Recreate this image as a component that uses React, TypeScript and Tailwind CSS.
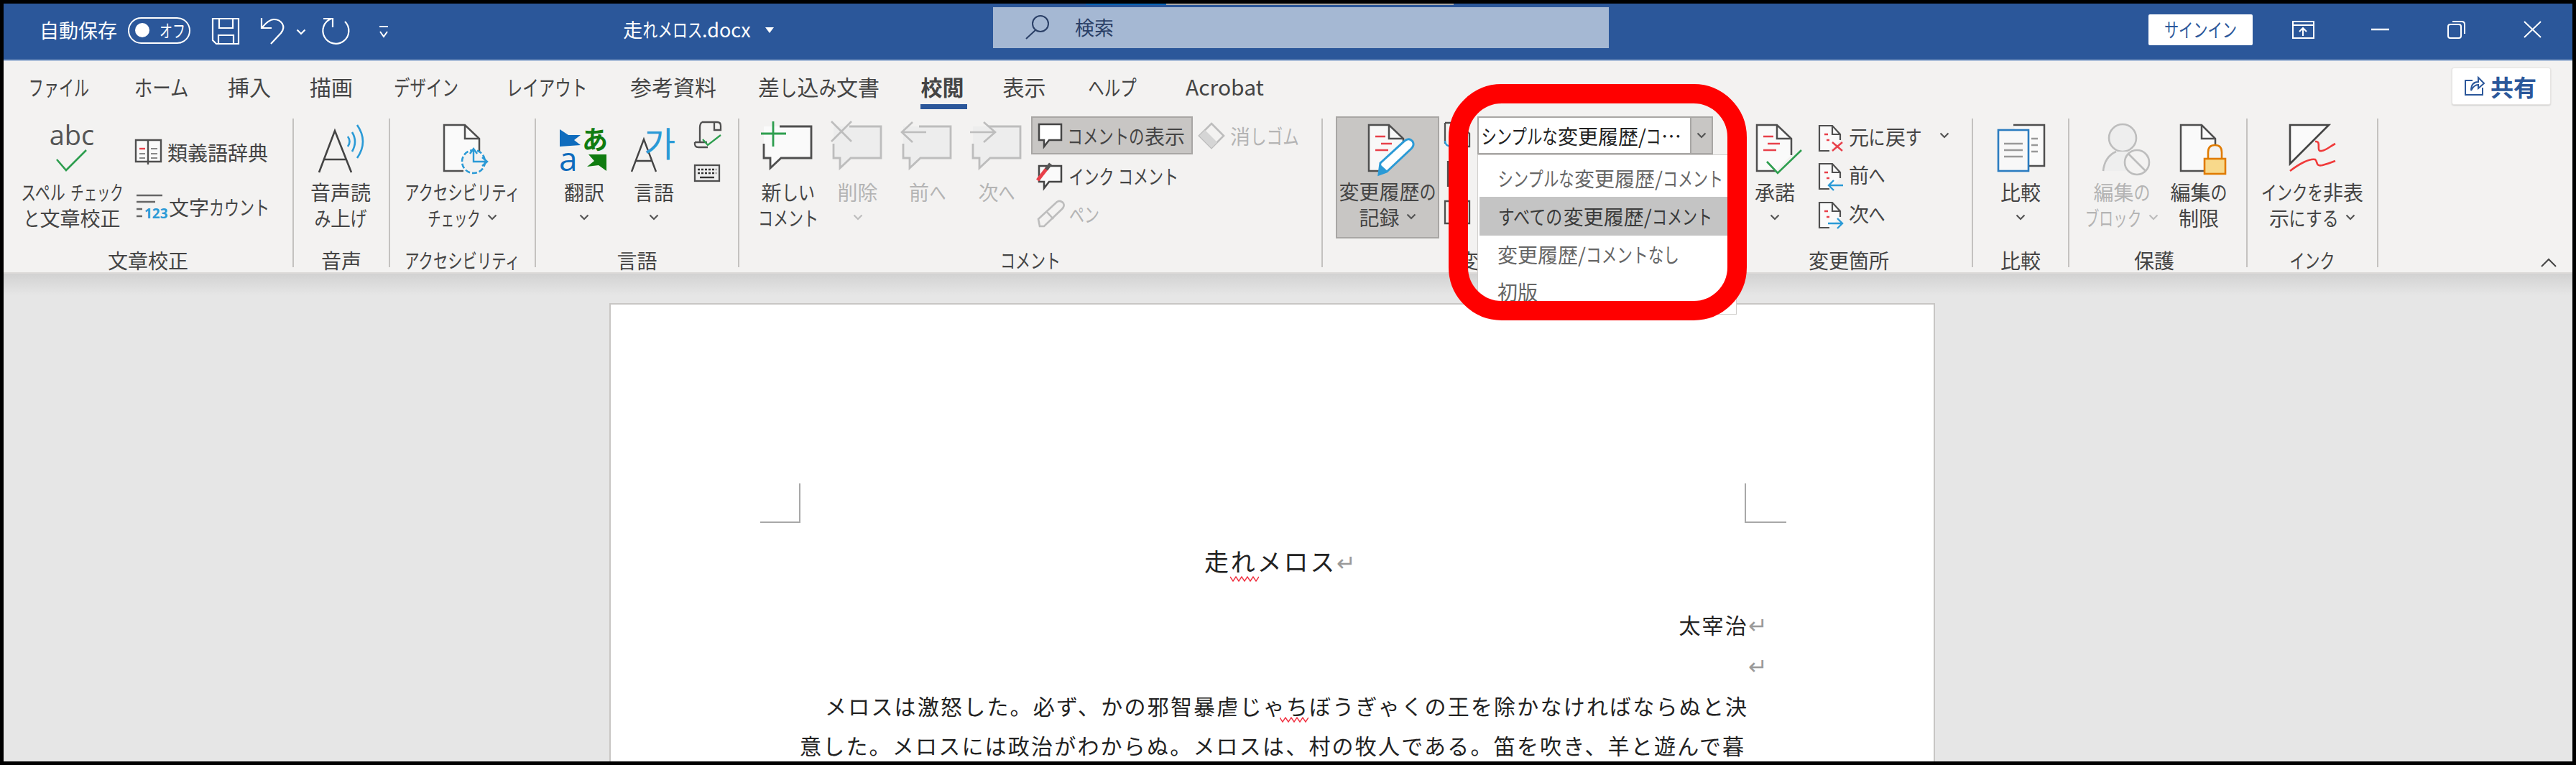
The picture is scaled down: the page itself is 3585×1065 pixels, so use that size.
import React from "react";

const KANA = /([\u3040-\u30ff]+)/;
const kw = (c: string) => {
  if ("ァィゥェォッャュョ".includes(c)) return 0.56;
  if ("ーホム".includes(c)) return 0.85;
  if (c >= "\u3040" && c <= "\u309f") return 0.82;
  return 0.75;
};

function J({ t }: { t: string }) {
  return (
    <>
      {t.split(KANA).map((run, i) => {
        if (!run) return null;
        if (!KANA.test(run)) return <span key={i}>{run}</span>;
        const chars = [...run];
        const sum = chars.reduce((a, c) => a + kw(c), 0);
        return (
          <span key={i} className="inline-flex justify-center" style={{ width: `${sum}em` }}>
            <span className="shrink-0" style={{ transform: `scaleX(${sum / chars.length})` }}>
              {run}
            </span>
          </span>
        );
      })}
    </>
  );
}

function Sv({ x, y, w, h, children, className }: { x: number; y: number; w: number; h: number; children?: React.ReactNode; className?: string }) {
  return (
    <svg width={w} height={h} viewBox={`${x} ${y} ${w} ${h}`} fill="none" strokeLinejoin="miter" className={"block shrink-0 overflow-visible " + (className || "")}>
      {children}
    </svg>
  );
}

function Chev({ c = "#555", className }: { c?: string; className?: string }) {
  return (
    <svg width="14" height="9" viewBox="0 0 14 9" fill="none" className={"inline-block shrink-0 " + (className || "")}>
      <path d="M1.5 1.5 L7 7 L12.5 1.5" stroke={c} strokeWidth="2.2" />
    </svg>
  );
}

const DARK = "#4f4f4f";
const GR = "#bdbdbd";

function Doc({ x, y, w = 48, h = 64, f = 29, g = 19, e = 20, fill = "#fafafa", s = DARK, sw = 2.5 }: { x: number; y: number; w?: number; h?: number; f?: number; g?: number; e?: number; fill?: string; s?: string; sw?: number }) {
  return (
    <>
      <path d={`M${x + w} ${y + h - e} V${y + g} L${x + f} ${y} H${x} V${y + h} H${x + w - e}`} fill={fill} stroke={s} strokeWidth={sw} />
      <path d={`M${x + f} ${y} V${y + g} H${x + w}`} stroke={s} strokeWidth={sw} />
    </>
  );
}

function Bub({ dx = 0, s = DARK, fill = "#fafafa" }: { dx?: number; s?: string; fill?: string }) {
  return (
    <g transform={`translate(${dx} 0)`}>
      <path d="M1063 176 H1129 V220 H1087 L1072 234 V220 H1063 Z" fill={fill} />
      <path d="M1085 176 H1129 V220 H1087 L1072 234 V220 H1063 V200" stroke={s} strokeWidth="2.8" />
    </g>
  );
}

function Big({ x, w, y = 165, icon, l1, l2, chev, gray }: { x: number; w: number; y?: number; icon: React.ReactNode; l1?: string; l2?: string; chev?: boolean; gray?: boolean }) {
  return (
    <div className={"flex flex-col items-center shrink-0 " + (gray ? "text-[#b4b4b4]" : "")}>
      <Sv x={x} y={y} w={w} h={85}>
        {icon}
      </Sv>
      <div className="h-[35px] leading-[35px] whitespace-pre">
        <J t={l1 || ""} />
      </div>
      <div className="h-[35px] flex items-center justify-center whitespace-pre">
        {l2 ? <J t={l2} /> : null}
        {chev ? <Chev c={gray ? GR : "#555"} className={l2 ? "ml-[9px]" : ""} /> : null}
      </div>
    </div>
  );
}

function G({ w, label, labelCls, children }: { w: string; label: string; labelCls?: string; children: React.ReactNode }) {
  return (
    <div className={"shrink-0 mt-[5px] h-[207px] border-r-2 border-[#c4c2c0] " + w}>
      <div className="flex h-[182px]">{children}</div>
      <div className={"h-[30px] leading-[30px] whitespace-pre " + (labelCls || "text-center")}>
        <J t={label} />
      </div>
    </div>
  );
}

const tabs: [string, string][] = [
  ["ファイル", "w-[88px] ml-[33px]"],
  ["ホーム", "w-[77px] ml-[60px]"],
  ["挿入", "w-[62px] ml-[53px]"],
  ["描画", "w-[62px] ml-[52px]"],
  ["デザイン", "w-[99px] ml-[51px]"],
  ["レイアウト", "w-[117px] ml-[60px]"],
  ["参考資料", "w-[126px] ml-[55px]"],
  ["差し込み文書", "w-[177px] ml-[51px]"],
  ["校閲", "w-[61px] ml-[53px] font-bold"],
  ["表示", "w-[63px] ml-[52px]"],
  ["ヘルプ", "w-[78px] ml-[52px]"],
  ["Acrobat", "w-[121px] ml-[57px]"],
];

function Wave({ className }: { className: string }) {
  return (
    <svg width="40" height="8" viewBox="0 0 40 8" fill="none" className={"absolute " + className}>
      <path d="M0 1 L4 7 L8 1 L12 7 L16 1 L20 7 L24 1 L28 7 L32 1 L36 7 L40 1" stroke="#f03040" strokeWidth="1.4" />
    </svg>
  );
}

function Ret() {
  return <span className="text-[#9a9a9a] text-[32px] font-normal tracking-normal">↵</span>;
}

export default function App() {
  return (
    <div className="relative w-[3585px] h-[1065px] bg-black p-[5px] overflow-hidden text-[28px] text-[#444444] font-['Noto_Sans_CJK_JP','Noto_Sans',sans-serif]">
      <div className="w-[3575px] h-[1055px] flex flex-col overflow-hidden">
        {/* title bar */}
        <div className="h-[80px] shrink-0 bg-[#2b579a] flex items-center text-white text-[27px] whitespace-pre border-b-2 border-[#a9bcd8]">
          <div className="ml-[50px] -mt-[4px]">自動保存</div>
          <div className="ml-[15px] -mt-[4px] w-[87px] h-[37px] rounded-full border-2 border-white flex items-center pl-[8px] shrink-0">
            <div className="w-[20px] h-[20px] rounded-full bg-white" />
            <div className="ml-[14px] text-[24px]"><J t="オフ" /></div>
          </div>
          <Sv x={297} y={29} w={38} h={38} className="ml-[30px]">
            <path d="M298 30 H334 V65 H303 L298 60 Z M307 30 V43 H326 V30 M306 65 V53 H327 V65" stroke="#fff" strokeWidth="2.2" />
          </Sv>
          <Sv x={363} y={28} w={40} h={40} className="ml-[28px]">
            <path d="M379 65 L393 50 C401 40 393 31 383 31 C377 31 372 36 367 42" stroke="#fff" strokeWidth="2.2" />
            <path d="M366 29 V43 H380" stroke="#fff" strokeWidth="2.2" />
          </Sv>
          <Chev c="#fff" className="ml-[11px]" />
          <Sv x={450} y={28} w={42} h={40} className="ml-[22px]">
            <path d="M463 30 A18 18 0 1 0 482 34" stroke="#fff" strokeWidth="2.2" />
            <path d="M452 30 H465 V42" stroke="#fff" strokeWidth="2.2" />
          </Sv>
          <Sv x={528} y={36} w={16} h={18} className="ml-[36px]">
            <path d="M530 38 H542 M531 45 L536 52 L541 45" stroke="#fff" strokeWidth="2" />
          </Sv>
          <div className="ml-[321px] -mt-[6px] w-[186px] flex justify-center"><J t="走れメロス.docx" /></div>
          <svg width="12" height="8" viewBox="0 0 12 8" className="ml-[16px] -mt-[4px] shrink-0">
            <path d="M0 0 H12 L6 8 Z" fill="#fff" />
          </svg>
          <div className="ml-[305px] -mt-[12px] w-[857px] h-[57px] bg-[#a5b8d3] flex items-center shrink-0 text-[#2a3f66]">
            <Sv x={1428} y={27} w={34} h={34} className="ml-[45px]">
              <circle cx="1449" cy="39" r="11" stroke="#2a3f66" strokeWidth="2" />
              <path d="M1442 48 L1429 60" stroke="#2a3f66" strokeWidth="2" />
            </Sv>
            <div className="ml-[35px] text-[27px]">検索</div>
          </div>
          <div className="ml-[751px] -mt-[6px] w-[145px] h-[43px] bg-white rounded-[2px] text-[#2b579a] flex items-center justify-center text-[27px] shrink-0">
            <J t="サインイン" />
          </div>
          <Sv x={3190} y={30} w={34} h={28} className="ml-[54px] -mt-[6px]">
            <path d="M3192 33 H3221 V56 H3192 Z M3192 38 H3221 M3206 53 V42 M3201 47 L3206 42 L3211 47" stroke="#fff" strokeWidth="2" />
          </Sv>
          <Sv x={3300} y={40} w={28} h={6} className="ml-[76px] -mt-[6px]">
            <path d="M3301 43 H3326" stroke="#fff" strokeWidth="2.5" />
          </Sv>
          <Sv x={3406} y={30} w={28} h={28} className="ml-[78px] -mt-[6px]">
            <path d="M3408 40 Q3408 37 3411 37 H3423 Q3426 37 3426 40 V53 Q3426 56 3423 56 H3411 Q3408 56 3408 53 Z M3414 33 H3427 Q3431 33 3431 37 V50" stroke="#fff" strokeWidth="2" />
          </Sv>
          <Sv x={3512} y={32} w={28} h={24} className="ml-[78px] -mt-[6px]">
            <path d="M3514 33 L3537 55 M3537 33 L3514 55" stroke="#fff" strokeWidth="2" />
          </Sv>
        </div>

        {/* ribbon */}
        <div className="h-[296px] shrink-0 bg-[#f3f2f1] relative border-b-2 border-[#dcdad8]">
          <div className="h-[75px] flex items-start pt-[13px] text-[30px]">
            {tabs.map(([t, c]) => (
              <div key={t} className={"relative h-[45px] flex items-center justify-center whitespace-pre shrink-0 " + c}>
                <J t={t} />
                {t === "校閲" ? <div className="absolute left-0 -right-[4px] top-[47px] h-[7px] bg-[#2b579a]" /> : null}
              </div>
            ))}
            <div className="ml-auto mr-[30px] mt-[-4px] w-[138px] h-[52px] bg-white rounded-[3px] border border-[#e6e4e2] flex items-center shrink-0 shadow-[0_1px_2px_rgba(0,0,0,0.15)]">
              <Sv x={3427} y={106} w={30} h={28} className="ml-[15px]">
                <path d="M3440 112 H3430 V132 H3454 V122" stroke="#2b579a" strokeWidth="2" />
                <path d="M3438 126 Q3438 114 3448 114 V108 L3456 116 L3448 123 V118 Q3442 118 3438 126 Z" stroke="#2b579a" strokeWidth="2" fill="#fff" />
              </Sv>
              <div className="ml-[8px] font-bold text-[32px] text-[#2b579a]">共有</div>
            </div>
          </div>

          <div className="flex">
            <G w="w-[404px]" label="文章校正">
              <div className="ml-[15px]">
                <Big x={20} w={160} l1="スペル チェック" l2="と文章校正" icon={
                  <>
                    <text x="100" y="202" textAnchor="middle" fontSize="38" fill="#555" fontFamily="Open Sans">abc</text>
                    <path d="M79 222 L92 237 L120 209" stroke="#2e9e4f" strokeWidth="2.6" />
                  </>
                } />
              </div>
              <div className="ml-[8px] flex flex-col pt-[9px]">
                <div className="h-[76px] flex items-center whitespace-pre">
                  <Sv x={188} y={190} w={38} h={38}>
                    <path d="M189 192 H206 L224 192 V222 H207 H189 Z" fill="#fafafa" stroke={DARK} strokeWidth="2.4" />
                    <path d="M206 192 V226" stroke={DARK} strokeWidth="2.4" />
                    <path d="M194 204 H202" stroke="#e8404a" strokeWidth="2.4" />
                    <path d="M194 211 H202 M194 217 H202 M210 204 H219 M210 211 H219 M210 217 H219" stroke="#888" strokeWidth="2" />
                  </Sv>
                  <div className="ml-[7px]">類義語辞典</div>
                </div>
                <div className="h-[76px] flex items-center whitespace-pre">
                  <Sv x={188} y={266} w={40} h={36}>
                    <path d="M190 268 H226 M190 277 H216" stroke="#666" strokeWidth="2.6" />
                    <path d="M190 287 H198 M190 297 H198" stroke="#666" strokeWidth="2.6" />
                    <text x="201" y="300" fontSize="19" fontWeight="700" fill="#2b9ad6" fontFamily="Open Sans">123</text>
                  </Sv>
                  <div className="ml-[7px]"><J t="文字カウント" /></div>
                </div>
              </div>
            </G>

            <G w="w-[134px]" label="音声">
              <Big x={410} w={130} l1="音声読" l2="み上げ" icon={
                <>
                  <path d="M445 240 L467 182 L490 240 M452 222 H483" stroke="#444" strokeWidth="2.6" />
                  <path d="M485 190 Q490 197 485 204 M491 184 Q499 197 491 211 M498 174 Q514 197 498 220" stroke="#2b9ad6" strokeWidth="2.6" />
                </>
              } />
            </G>

            <G w="w-[203px]" label="アクセシビリティ">
              <Big x={543} w={201} l1="アクセシビリティ" l2="チェック" chev icon={
                <>
                  <Doc x={618} y={174} w={49} h={64} f={29} g={19} e={22} />
                  <circle cx="659" cy="225" r="16" stroke="#2b9ad6" strokeWidth="2.6" strokeDasharray="7 3" fill="#f3f2f1" />
                  <path d="M659 207 V225 H677 M671 219 L678 225 L671 231 M654 214 L659 207 L664 214" stroke="#2b9ad6" strokeWidth="2.4" />
                </>
              } />
            </G>

            <G w="w-[283px]" label="言語">
              <div className="ml-[17px]">
                <Big x={763} w={100} l1="翻訳" chev icon={
                  <>
                    <path d="M779 180 L791 188 H808 L799 195 L808 202 L779 204 Z" fill="#0f6cbd" />
                    <text x="778" y="238" fontSize="46" fontWeight="500" fill="#0f6cbd" fontFamily="Open Sans">a</text>
                    <text x="810" y="208" fontSize="36" fill="#107c10" fontWeight="700">あ</text>
                    <path d="M844 215 V238 L833 230 L817 232 L827 224 L819 215 Z" fill="#107c10" />
                  </>
                } />
              </div>
              <Big x={863} w={94} l1="言語" chev icon={
                <>
                  <path d="M879 239 L896 194 L913 239 M885 224 H907" stroke="#444" strokeWidth="2.4" />
                  <text x="896" y="218" fontSize="48" fill="#2b9ad6" fontFamily="Noto Sans CJK KR">가</text>
                </>
              } />
              <div className="ml-[9px]">
                <Sv x={966} y={165} w={38} h={90}>
                  <path d="M977 170 H998 Q1003 170 1003 175 V181 H994 V170 M977 170 Q974 172 974 178 V198 M967 198 H984 M967 198 Q966 205 972 205 H985" stroke={DARK} strokeWidth="2.3" />
                  <path d="M978 194 L985 202 L1003 188" stroke="#2e9e4f" strokeWidth="2.3" />
                  <rect x="967" y="230" width="34" height="22" fill="#eee" stroke={DARK} strokeWidth="2.3" />
                  <path d="M971 236 H997 M971 241 H997" stroke="#333" strokeWidth="2.4" strokeDasharray="3 2" />
                  <path d="M974 247 H994" stroke="#333" strokeWidth="2.4" />
                </Sv>
              </div>
            </G>

            <G w="w-[812px]" label="コメント">
              <div className="ml-[19px]">
                <Big x={1048} w={97} l1="新しい" l2="コメント" icon={
                  <>
                    <Bub />
                    <path d="M1059 186 H1094 M1076 169 V204" stroke="#2e9e4f" strokeWidth="2.8" />
                  </>
                } />
              </div>
              <Big x={1145} w={97} gray l1="削除" chev icon={
                <>
                  <Bub dx={97} s={GR} fill="#ededed" />
                  <path d="M1157 169 L1185 197 M1185 169 L1157 197" stroke={GR} strokeWidth="2.6" />
                </>
              } />
              <Big x={1242} w={97} gray l1="前へ" icon={
                <>
                  <Bub dx={194} s={GR} fill="#ededed" />
                  <path d="M1255 184 H1289 M1270 170 L1255 184 L1270 198" stroke={GR} strokeWidth="2.6" />
                </>
              } />
              <Big x={1339} w={96} gray l1="次へ" icon={
                <>
                  <Bub dx={291} s={GR} fill="#ededed" />
                  <path d="M1350 184 H1385 M1369 170 L1385 184 L1369 198" stroke={GR} strokeWidth="2.6" />
                </>
              } />
              <div className="flex flex-col -mt-[3px] shrink-0">
                <div className="flex items-start">
                  <div className="w-[225px] h-[53px] bg-[#c8c6c4] border-2 border-[#a8a6a4] flex items-center whitespace-pre shrink-0">
                    <Sv x={1445} y={170} w={34} h={35} className="ml-[8px]">
                      <path d="M1446 172 H1477 V194 H1460 L1453 203 V194 H1446 Z" fill="#fff" stroke="#444" strokeWidth="2.5" />
                    </Sv>
                    <div className="ml-[7px]"><J t="コメントの表示" /></div>
                  </div>
                  <div className="h-[53px] ml-[8px] flex items-center whitespace-pre text-[#b4b4b4]">
                    <Sv x={1668} y={168} w={36} h={38}>
                      <path d="M1686 170 L1703 187 L1686 204 L1669 187 Z" stroke={GR} strokeWidth="2.6" />
                      <path d="M1677 179 L1694 196 L1686 204 L1669 187 Z" fill="#d5d5d5" />
                    </Sv>
                    <div className="ml-[8px]"><J t="消しゴム" /></div>
                  </div>
                </div>
                <div className="h-[60px] flex items-center whitespace-pre pl-[8px]">
                  <Sv x={1443} y={221} w={36} h={38}>
                    <path d="M1446 226 H1477 V248 H1460 L1453 257 V248 H1446 Z" fill="#fafafa" stroke="#444" strokeWidth="2.5" />
                    <path d="M1444 246 L1458 228" stroke="#e8404a" strokeWidth="5" />
                    <path d="M1456 231 L1462 223" stroke="#555" strokeWidth="5" />
                  </Sv>
                  <div className="ml-[8px]"><J t="インク コメント" /></div>
                </div>
                <div className="h-[46px] flex items-center whitespace-pre pl-[8px] text-[#b4b4b4]">
                  <Sv x={1442} y={276} w={40} h={40}>
                    <path d="M1446 313 L1444 303 L1470 279 Q1475 276 1479 281 Q1481 285 1477 289 L1452 313 Z M1455 292 L1465 303" stroke={GR} strokeWidth="2.6" />
                  </Sv>
                  <div className="ml-[5px]"><J t="ペン" /></div>
                </div>
              </div>
            </G>

            <G w="w-[578px]" label="変更履歴" labelCls="pl-[189px]">
              <div className="ml-[18px] -mt-[3px] w-[144px] h-[170px] bg-[#c8c6c4] border-2 border-[#a8a6a4] flex justify-center shrink-0 whitespace-pre">
                <Big x={1861} w={140} y={164} l1="変更履歴の" l2="記録" chev icon={
                  <>
                    <Doc x={1905} y={174} w={48} h={64} f={28} g={19} e={22} fill="#f8f8f8" />
                    <path d="M1914 190 H1928 M1922 200 H1937 M1914 209 H1932" stroke="#e8404a" strokeWidth="2.6" />
                    <path d="M1919 243 L1921 227 L1955 196 Q1961 191 1966 197 Q1969 202 1964 207 L1930 239 Z" fill="#fff" stroke="#2b9ad6" strokeWidth="3" />
                    <path d="M1919 243 L1921 229 L1931 238 Z" fill="#2b9ad6" />
                  </>
                } />
              </div>
              <div className="ml-[6px]">
                <Sv x={2010} y={165} w={40} h={155}>
                  <path d="M2012 171 H2030 L2046 186 V204 H2028 M2012 171 V200" stroke={DARK} strokeWidth="2.3" />
                  <path d="M2012 196 Q2012 204 2022 204" stroke="#2b9ad6" strokeWidth="2.3" />
                  <path d="M2016 224 V260 M2042 224 V260" stroke={DARK} strokeWidth="2.3" />
                  <path d="M2012 280 H2046 V311 H2012 Z" stroke={DARK} strokeWidth="2.3" />
                </Sv>
              </div>
            </G>

            <G w="w-[327px]" label="変更箇所" labelCls="pl-[98px]">
              <div className="ml-[1px]">
                <Big x={2420} w={100} l1="承諾" chev icon={
                  <>
                    <Doc x={2445} y={174} w={48} h={64} f={28} g={19} e={22} />
                    <path d="M2454 190 H2468 M2460 200 H2477 M2454 209 H2472" stroke="#e8404a" strokeWidth="2.6" />
                    <path d="M2459 225 L2474 241 L2507 209" stroke="#2e9e4f" strokeWidth="2.6" />
                  </>
                } />
              </div>
              <div className="ml-[10px] flex flex-col">
                {[0, 54, 108].map((d, i) => (
                  <div key={d} className="h-[53.5px] flex items-center whitespace-pre">
                    <Sv x={2529} y={167 + d} w={38} h={40}>
                      <Doc x={2531} y={170 + d} w={29} h={35} f={18} g={12} e={15} sw={2.2} />
                      <path d={`M2538 ${182 + d} h5 M2541 ${190 + d} h4`} stroke="#e8404a" strokeWidth="2.4" />
                      {i === 0 ? <path d="M2549 193 L2563 205 M2563 193 L2549 205" stroke="#e8404a" strokeWidth="2.4" /> : null}
                      {i === 1 ? <path d="M2564 254 H2544 M2551 247 L2544 254 L2551 261" stroke="#2b9ad6" strokeWidth="2.4" /> : null}
                      {i === 2 ? <path d="M2543 307 H2563 M2556 300 L2563 307 L2556 314" stroke="#2b9ad6" strokeWidth="2.4" /> : null}
                    </Sv>
                    <div className="ml-[5px] -mt-[4px]"><J t={["元に戻す", "前へ", "次へ"][i]} /></div>
                    {i === 0 ? <Chev className="ml-[24px] -mt-[6px]" /> : null}
                  </div>
                ))}
              </div>
            </G>

            <G w="w-[134px]" label="比較">
              <Big x={2746} w={132} l1="比較" chev icon={
                <>
                  <path d="M2802 174 H2845 V231 H2820" fill="#fafafa" stroke={DARK} strokeWidth="2.5" />
                  <path d="M2827 193 H2836 M2827 202 H2836 M2827 211 H2836" stroke="#999" strokeWidth="2.4" />
                  <rect x="2781" y="181" width="42" height="57" fill="#f8f8f8" stroke="#2b7cc0" strokeWidth="2.6" />
                  <path d="M2789 200 H2815 M2789 209 H2815 M2789 218 H2815" stroke="#999" strokeWidth="2.6" />
                </>
              } />
            </G>

            <G w="w-[248px]" label="保護" labelCls="text-center pr-[10px]">
              <div className="ml-[17px]">
                <Big x={2897} w={112} gray l1="編集の" l2="ブロック" chev icon={
                  <>
                    <circle cx="2954" cy="192" r="19" fill="#eeeeee" stroke={GR} strokeWidth="2.6" />
                    <path d="M2927 238 Q2929 218 2945 211 H2963 L2975 220 V238 Z" fill="#eeeeee" />
                    <path d="M2927 238 Q2929 218 2945 211" stroke={GR} strokeWidth="2.6" />
                    <circle cx="2974" cy="226" r="17" fill="#f3f2f1" stroke={GR} strokeWidth="2.6" />
                    <path d="M2962 214 L2986 238" stroke={GR} strokeWidth="2.6" />
                  </>
                } />
              </div>
              <Big x={3009} w={102} l1="編集の" l2="制限" icon={
                <>
                  <Doc x={3035} y={174} w={48} h={64} f={29} g={19} e={15} />
                  <path d="M3073 221 V212 Q3073 202 3082.500 202 Q3092 202 3092 212 V221" stroke="#e07b00" strokeWidth="2.6" fill="#f3f2f1" />
                  <rect x="3068" y="221" width="29" height="21" fill="#f8d98b" stroke="#e07b00" strokeWidth="2.6" />
                </>
              } />
            </G>

            <G w="w-[182px]" label="インク">
              <Big x={3128} w={180} l1="インクを非表" l2="示にする" chev icon={
                <>
                  <path d="M3187 174 H3241 L3187 228 Z" fill="#fafafa" stroke="#444" strokeWidth="2.6" />
                  <path d="M3222 197 C3232 196 3222 212 3231 210 C3238 209 3242 204 3250 200" stroke="#f03a3a" strokeWidth="2.6" />
                  <path d="M3187 238 C3200 228 3215 220 3222 222 C3226 225 3222 232 3232 230 C3240 228 3245 226 3250 224" stroke="#f03a3a" strokeWidth="2.6" />
                </>
              } />
            </G>
          </div>
          <svg width="24" height="14" viewBox="0 0 24 14" fill="none" className="absolute left-[3530px] top-[274px]">
            <path d="M2 12 L12 2 L22 12" stroke="#444" strokeWidth="2" />
          </svg>
        </div>

        {/* document */}
        <div className="flex-1 min-h-0 bg-[linear-gradient(#d2d2d2,#e6e6e6_30px)] overflow-hidden pt-[41px] pl-[843px]">
          <div className="w-[1845px] h-[640px] bg-white border-2 border-[#c8c6c4] text-[#222222]">
            <div className="flex justify-between pl-[208px] pr-[205px] pt-[249px]">
              <div className="w-[56px] h-[55px] border-r-2 border-b-2 border-[#a8a8a8]" />
              <div className="w-[58px] h-[55px] border-l-2 border-b-2 border-[#a8a8a8]" />
            </div>
            <div className="w-[1321px] ml-[263px]">
              <div className="mt-[25px] pl-[16px] h-[56px] leading-[56px] text-center text-[34px] tracking-[2.8px] whitespace-pre">
                走<span className="relative">れ<Wave className="left-[-1px] top-[46px]" /></span>メロス<Ret />
              </div>
              <div className="mt-[31px] h-[56px] leading-[56px] text-right text-[30px] tracking-[2.2px] whitespace-pre mr-[-26px]">
                太宰治<Ret />
              </div>
              <div className="mt-[1px] h-[56px] leading-[56px] text-right whitespace-pre mr-[-26px]">
                <Ret />
              </div>
              <div className="mt-[2px] text-[30px] h-[55px] leading-[55px] tracking-[2.2px] pl-[35px] whitespace-nowrap">
                メロスは激怒した。必ず、かの邪智暴虐じゃ<span className="relative">ち<Wave className="left-[-9px] top-[38px]" /></span>ぼうぎゃくの王を除かなければならぬと決
              </div>
              <div className="mt-[5px] text-[30px] h-[44px] leading-[44px] tracking-[2.2px] whitespace-nowrap">
                意した。メロスには政治がわからぬ。メロスは、村の牧人である。笛を吹き、羊と遊んで暮
              </div>
            </div>
          </div>
        </div>
      </div>

      {/* open dropdown */}
      <div className="absolute left-[2056px] top-[162px] w-[328px] h-[53px] bg-white border-2 border-[#a8a6a4] flex items-center text-[28px] text-[#222222] whitespace-pre">
        <div className="ml-[3px] flex-1 overflow-hidden"><J t="シンプルな変更履歴/コ…" /></div>
        <div className="w-[30px] h-full bg-[#c8c6c4] border-l-2 border-[#a8a6a4] flex items-center justify-center shrink-0">
          <Chev />
        </div>
      </div>
      <div className="absolute left-[2056px] top-[215px] w-[361px] h-[223px] bg-white border border-[#d0cecc] pl-[2px] pt-[6px] text-[28px] whitespace-pre">
        <div className="h-[52px] flex items-center pl-[25px] text-[#666666]"><span><J t="シンプルな変更履歴/コメント" /></span></div>
        <div className="h-[54px] flex items-center pl-[25px] bg-[#c4c4c4] text-[#3a3a3a]"><span><J t="すべての変更履歴/コメント" /></span></div>
        <div className="h-[56px] flex items-center pl-[25px] -mt-[2px] text-[#666666]"><span><J t="変更履歴/コメントなし" /></span></div>
        <div className="h-[48px] flex items-center pl-[25px] text-[#666666]"><span>初版</span></div>
      </div>

      {/* red annotation ring */}
      <div className="absolute left-[2016px] top-[117px] w-[415px] h-[329px] rounded-[74px] border-[27px] border-[#ff0000]" />

      {/* progress hairline at the top edge */}
      <div className="absolute left-[1511px] top-[5px] w-[112px] h-[2px] bg-[#0a64b4]" />
      <div className="absolute left-[1623px] top-[5px] w-[400px] h-[2px] bg-[#a8a8a8]" />
    </div>
  );
}
